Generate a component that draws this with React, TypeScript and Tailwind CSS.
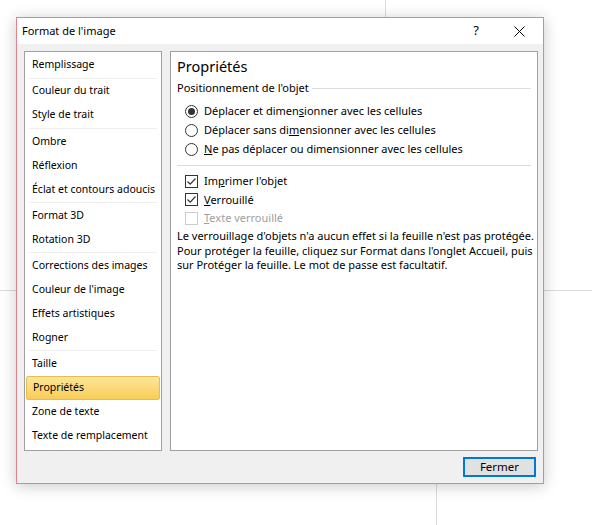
import React from 'react';

// Sidebar groups, a faint rule sits between each group
const groups: string[][] = [
    ['Remplissage'],
    ['Couleur du trait', 'Style de trait'],
    ['Ombre', 'Réflexion', 'Éclat et contours adoucis'],
    ['Format 3D', 'Rotation 3D'],
    ['Corrections des images', "Couleur de l'image", 'Effets artistiques', 'Rogner'],
    ['Taille', 'Propriétés', 'Zone de texte', 'Texte de remplacement'],
];

const ACTIVE = 'Propriétés';

function Radio({ checked }: { checked?: boolean }) {
    return (
        <span className="flex h-[13px] w-[13px] items-center justify-center rounded-full border border-[#333] bg-white">
            {checked && <span className="h-[7px] w-[7px] rounded-full bg-[#333]" />}
        </span>
    );
}

function Check({ checked, disabled }: { checked?: boolean; disabled?: boolean }) {
    return (
        <span
            className={`flex h-[13px] w-[13px] items-center justify-center border bg-white ${
                disabled ? 'border-[#cccccc]' : 'border-[#333]'
            }`}
        >
            {checked && (
                <svg width="11" height="11" viewBox="0 0 11 11">
                    <path d="M1.5 5.5 L4.2 8.2 L9.5 2.5" fill="none" stroke="#333" strokeWidth="1.2" />
                </svg>
            )}
        </span>
    );
}

export default function App() {
    return (
        <div
            className="relative h-[525px] w-[592px] overflow-hidden bg-white text-[11px] text-black"
            style={{ fontFamily: '"Noto Sans", "Open Sans", sans-serif' }}
        >
            {/* Faint sheet gridlines behind the dialog */}
            <div className="absolute left-[385px] top-0 h-[20px] w-px bg-[#dcdcdc]" />
            <div className="absolute left-[436px] top-[480px] h-[45px] w-px bg-[#dcdcdc]" />
            <div className="absolute left-0 top-[290px] h-px w-[18px] bg-[#dcdcdc]" />
            <div className="absolute left-[542px] top-[290px] h-px w-[50px] bg-[#dcdcdc]" />

            {/* Dialog */}
            <div className="relative ml-[16px] mt-[17px] flex h-[467px] w-[528px] flex-col border border-[#e0848f] bg-[#f0f0f0] shadow-[0_2px_14px_rgba(0,0,0,0.22)]">
                {/* Title bar */}
                <div className="flex h-[26px] shrink-0 items-center bg-white pl-[5px]">
                    <span className="text-[11px]">Format de l'image</span>
                    <span className="ml-auto mr-[35px] text-[13px]">?</span>
                    <svg width="11" height="11" viewBox="0 0 11 11" className="mr-[18px]">
                        <path d="M0.5 0.5 L10.5 10.5 M10.5 0.5 L0.5 10.5" stroke="#000" strokeWidth="1" />
                    </svg>
                </div>

                {/* Body */}
                <div className="flex flex-1 flex-col pl-[7px] pt-[7px]">
                    <div className="flex gap-[8px]">
                        {/* Category list */}
                        <div className="h-[400px] w-[138px] border border-[#a0a0a0] bg-white px-[1px] pt-[1px] text-[10.5px]">
                            {groups.map((g, gi) => (
                                <div key={gi}>
                                    {gi > 0 && <div className="mx-[3px] my-[0.6px] h-px bg-[#efefef]" />}
                                    {g.map((item) => (
                                        <div
                                            key={item}
                                            className={`flex h-[24px] items-center whitespace-nowrap px-[6px] ${
                                                item === ACTIVE
                                                    ? 'rounded-[2px] border border-[#e3bd5a] bg-gradient-to-b from-[#fde596] to-[#f8cd55]'
                                                    : ''
                                            }`}
                                        >
                                            {item}
                                        </div>
                                    ))}
                                </div>
                            ))}
                        </div>

                        {/* Properties pane */}
                        <div className="h-[400px] w-[368px] border border-[#a0a0a0] bg-white pl-[6px] pr-[6px] pt-[5px]">
                            <div className="flex h-[20px] items-center text-[14.5px]">Propriétés</div>
                            <div className="mt-[3px] flex h-[16px] items-center">
                                <span className="whitespace-nowrap">Positionnement de l'objet</span>
                                <div className="ml-[3px] h-px flex-1 bg-[#dcdcdc]" />
                            </div>

                            <div className="mt-[6px] pl-[8px]">
                                <label className="flex h-[19px] items-center gap-[6px]">
                                    <Radio checked />
                                    <span>
                                        Déplacer et dimen<span className="underline">s</span>ionner avec les cellules
                                    </span>
                                </label>
                                <label className="flex h-[19px] items-center gap-[6px]">
                                    <Radio />
                                    <span>
                                        Déplacer sans di<span className="underline">m</span>ensionner avec les cellules
                                    </span>
                                </label>
                                <label className="flex h-[19px] items-center gap-[6px]">
                                    <Radio />
                                    <span>
                                        <span className="underline">N</span>e pas déplacer ou dimensionner avec les cellules
                                    </span>
                                </label>
                            </div>

                            <div className="mt-[6px] h-px bg-[#dcdcdc]" />

                            <div className="mt-[6px] pl-[8px]">
                                <label className="flex h-[18.5px] items-center gap-[6px]">
                                    <Check checked />
                                    <span>
                                        Im<span className="underline">p</span>rimer l'objet
                                    </span>
                                </label>
                                <label className="flex h-[18.5px] items-center gap-[6px]">
                                    <Check checked />
                                    <span>
                                        <span className="underline">V</span>errouillé
                                    </span>
                                </label>
                                <label className="flex h-[18.5px] items-center gap-[6px] text-[#a0a0a0]">
                                    <Check disabled />
                                    <span>
                                        <span className="underline">T</span>exte verrouillé
                                    </span>
                                </label>
                            </div>

                            <p className="mt-[1.5px] whitespace-nowrap leading-[14.5px]">
                                Le verrouillage d'objets n'a aucun effet si la feuille n'est pas protégée.
                                <br />
                                Pour protéger la feuille, cliquez sur Format dans l'onglet Accueil, puis
                                <br />
                                sur Protéger la feuille. Le mot de passe est facultatif.
                            </p>
                        </div>
                    </div>

                    {/* Footer */}
                    <div className="mt-[6px] flex pr-[7px]">
                        <button className="ml-auto flex h-[20px] w-[73px] items-center justify-center border-2 border-[#0078d7] bg-[#e1e1e1] text-[11.5px]">
                            Fermer
                        </button>
                    </div>
                </div>
            </div>
        </div>
    );
}
